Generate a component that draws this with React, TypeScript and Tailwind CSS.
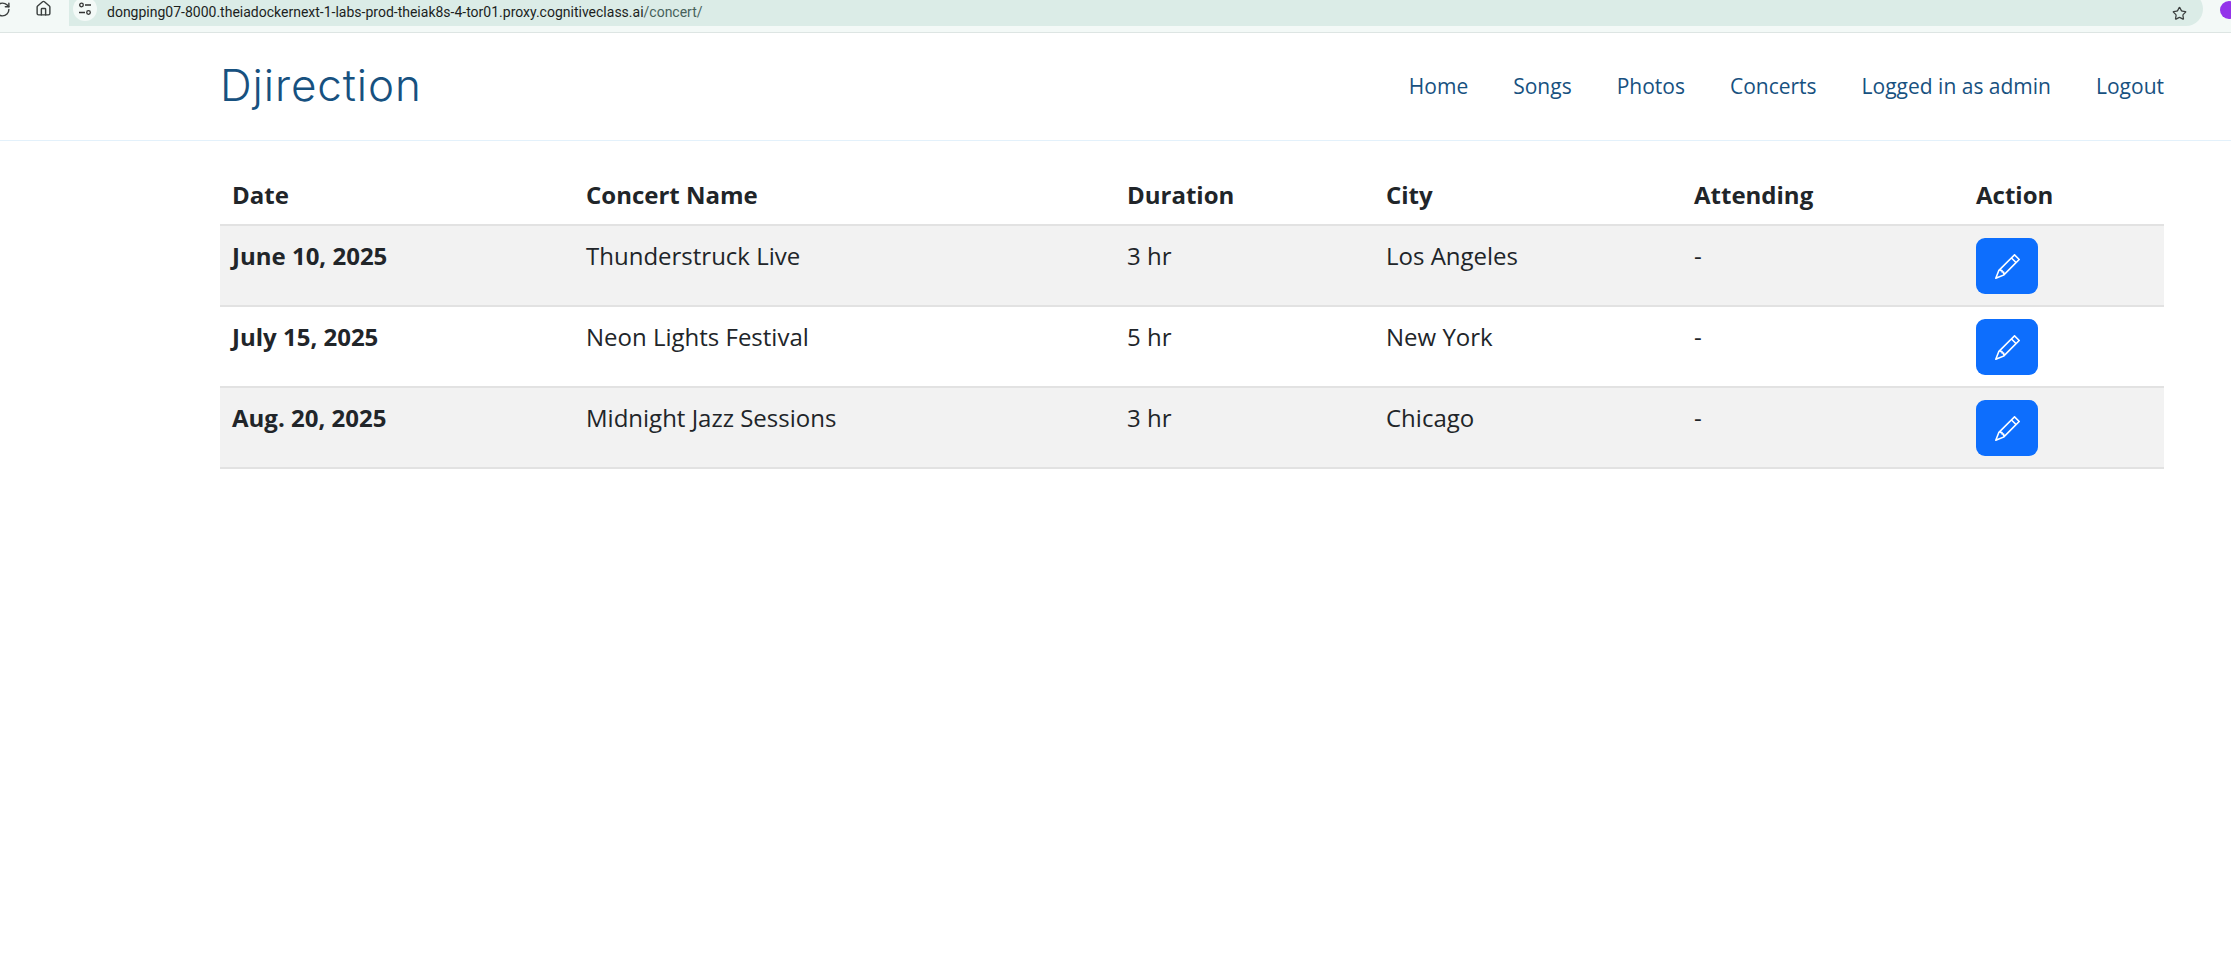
import { BsPencil } from "react-icons/bs";
import { LuHouse, LuRotateCw, LuStar } from "react-icons/lu";

const navLinks = ["Home", "Songs", "Photos", "Concerts", "Logged in as admin", "Logout"];

const concerts = [
  { date: "June 10, 2025", name: "Thunderstruck Live", duration: "3 hr", city: "Los Angeles" },
  { date: "July 15, 2025", name: "Neon Lights Festival", duration: "5 hr", city: "New York" },
  { date: "Aug. 20, 2025", name: "Midnight Jazz Sessions", duration: "3 hr", city: "Chicago" },
];

const cols = "grid grid-cols-[354px_541px_259px_308px_282px_200px]";

export default function App() {
  return (
    <div className="min-h-screen bg-white font-['Open_Sans',sans-serif]">
      {/* Browser bar */}
      <div className="relative flex h-[33px] items-start overflow-hidden border-b border-[#dde5e3] bg-[#f3f9f7]">
        <LuRotateCw className="ml-[-6px] mt-[1px] text-[17px] text-[#3a3f3e]" />
        <LuHouse className="ml-[24px] mt-[0px] h-[17px] w-[17px] text-[#3a3f3e]" />
        <div className="ml-[17px] mt-[-8px] flex h-[34px] w-[2134px] shrink-0 items-center rounded-r-full rounded-l-[22px] bg-[#dbece7] pl-[4px]">
          <div className="flex h-[24px] w-[24px] items-center justify-center rounded-full bg-[#f3f9f7]">
            <svg width="14" height="14" viewBox="0 0 14 14" fill="none" stroke="#333" strokeWidth="1.3">
              <circle cx="3.5" cy="3" r="1.8" />
              <path d="M7 3h6M1 10.5h6" />
              <circle cx="10.5" cy="10.5" r="1.8" />
            </svg>
          </div>
          <span className="ml-[10px] mt-[6px] font-['Roboto',sans-serif] text-[14px] leading-[18px] text-[#1c1f1e]">
            dongping07-8000.theiadockernext-1-labs-prod-theiak8s-4-tor01.proxy.cognitiveclass.ai
            <span className="text-[#47625b]">/concert/</span>
          </span>
          <LuStar className="ml-auto mr-[16px] mt-[8px] h-[15px] w-[15px] text-[#3a3f3e]" />
        </div>
        <div className="absolute left-[2220px] top-[1px] h-[18px] w-[18px] rounded-full bg-[#9333ea]" />
      </div>

      {/* Navbar */}
      <nav className="flex h-[108px] items-center justify-between border-b border-[#e3f1fb] pl-[220px] pr-[67px]">
        <span className="mt-[-3px] font-['Inter',sans-serif] text-[44px] font-light leading-none tracking-[0.9px] text-[#17517f]">
          Djirection
        </span>
        <div className="flex gap-[45px] text-[21px] text-[#17517f]">
          {navLinks.map((link) => (
            <a key={link} href="#">
              {link}
            </a>
          ))}
        </div>
      </nav>

      {/* Table */}
      <div className="ml-[220px] mr-[67px] text-[24px] text-[#212529]">
        <div className={`${cols} h-[85px] items-end border-b-2 border-[#e2e2e2] pb-[11px] font-bold`}>
          <div className="px-3">Date</div>
          <div className="px-3">Concert Name</div>
          <div className="px-3">Duration</div>
          <div className="px-3">City</div>
          <div className="px-3">Attending</div>
          <div className="px-3">Action</div>
        </div>
        {concerts.map((c, i) => (
          <div
            key={c.name}
            className={`${cols} h-[81px] border-b-2 border-[#e2e2e2] pt-[12px] ${i % 2 === 0 ? "bg-[#f2f2f2]" : "bg-white"}`}
          >
            <div className="px-3 font-bold">{c.date}</div>
            <div className="px-3">{c.name}</div>
            <div className="px-3">{c.duration}</div>
            <div className="px-3">{c.city}</div>
            <div className="px-3">-</div>
            <div className="px-3">
              <button className="flex h-[56px] w-[62px] items-center justify-center rounded-[9px] bg-[#0d6efd] text-white">
                <BsPencil className="h-[25px] w-[25px]" />
              </button>
            </div>
          </div>
        ))}
      </div>
    </div>
  );
}
